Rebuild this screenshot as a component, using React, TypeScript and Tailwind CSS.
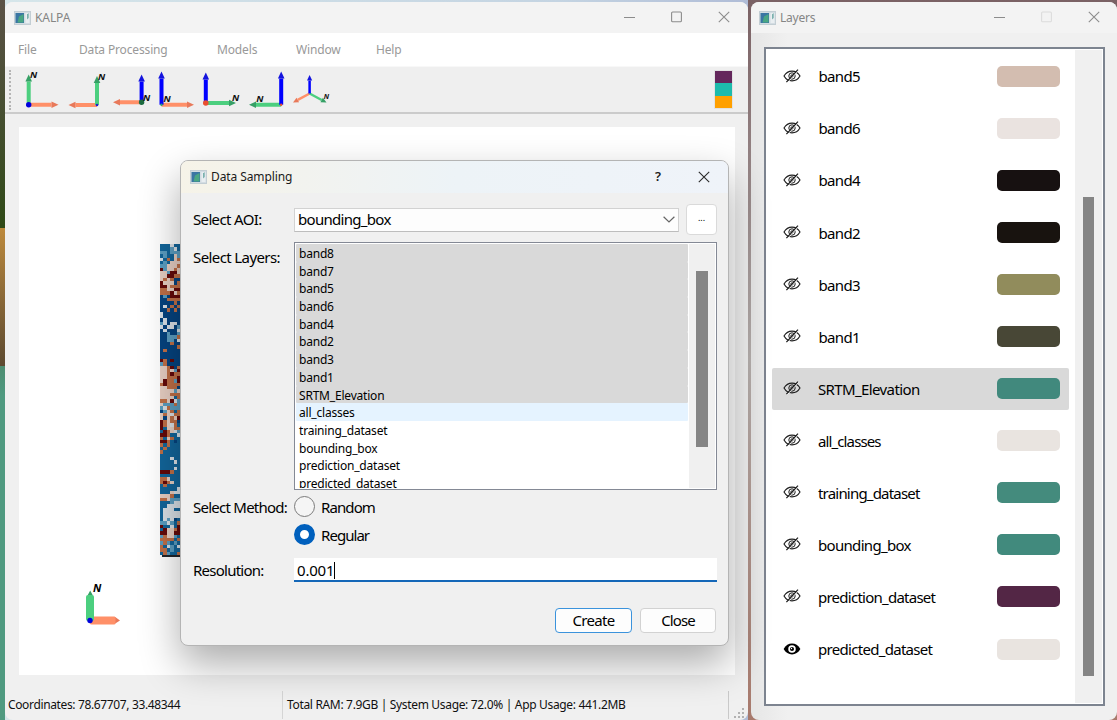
import React from "react";

const GREEN = "#4ccf7f";
const ORANGE = "#ff9068";
const BLUE = "#0000ff";

type Axis = { to: [number, number]; color: string; head: string };
type AxisSpec = {
  box: [number, number];
  origin: [number, number];
  axes: Axis[];
  dot?: string;
  dotSize?: number;
  north: [number, number];
  thin?: boolean;
};

const up = (x: number, y: number): Axis => ({ to: [x, y], color: BLUE, head: "#1414dd" });
const green = (x: number, y: number): Axis => ({ to: [x, y], color: GREEN, head: "#36a066" });
const orange = (x: number, y: number): Axis => ({ to: [x, y], color: ORANGE, head: "#e8795a" });

const VIEWS: AxisSpec[] = [
  { box: [22, 40], origin: [28.7, 104.7], axes: [green(28.7, 74.5), orange(58.5, 104.7)], dot: "#0000dd", dotSize: 2.7, north: [30, 78] },
  { box: [62, 48], origin: [97, 105], axes: [orange(68.5, 105), green(97, 76)], dot: "#2222cc", dotSize: 1.3, north: [98, 79.6] },
  { box: [110, 43], origin: [141.6, 102.3], axes: [orange(113, 102.3), up(141.6, 74.5)], dot: "#1c6b40", dotSize: 2.7, north: [143, 100.6] },
  { box: [153, 43], origin: [161.5, 104.7], axes: [orange(194, 104.7), up(161.5, 71.5)], dot: "#2c9c78", dotSize: 1.2, north: [163.4, 102.3] },
  { box: [196, 47], origin: [205.8, 103], axes: [up(205.8, 72.5), green(236, 103)], dot: "#e9502f", dotSize: 2.8, north: [232, 100.6] },
  { box: [243, 47], origin: [281.2, 104.7], axes: [green(249, 104.7), up(281.2, 71.5)], dot: "#e9502f", dotSize: 1.2, north: [256.3, 102] },
  { box: [290, 42], origin: [309.6, 93.5], axes: [orange(293, 102.6), green(326.5, 102.6), up(309.6, 75)], north: [323.7, 99.2], thin: true },
];

function AxisIcon({ box, origin, axes, dot, dotSize, north, thin }: AxisSpec) {
  return (
    <svg width={box[1]} height={45} viewBox={`${box[0]} 67 ${box[1]} 45`} className="shrink-0">
      {axes.map(({ to, color, head }, i) => {
        const dx = to[0] - origin[0];
        const dy = to[1] - origin[1];
        const len = Math.hypot(dx, dy);
        const ux = dx / len;
        const uy = dy / len;
        const h = thin ? 5.5 : 7;
        const w = thin ? 2.6 : 3.3;
        const bx = to[0] - ux * h;
        const by = to[1] - uy * h;
        return (
          <g key={i}>
            <line x1={origin[0]} y1={origin[1]} x2={bx} y2={by} stroke={color} strokeWidth={thin ? 2.5 : 4} />
            <polygon points={`${to[0]},${to[1]} ${bx - uy * w},${by + ux * w} ${bx + uy * w},${by - ux * w}`} fill={head} />
          </g>
        );
      })}
      {dot && <circle cx={origin[0]} cy={origin[1]} r={dotSize} fill={dot} />}
      <text x={north[0]} y={north[1]} fontFamily="Noto Sans, sans-serif" fontStyle="italic" fontWeight="700" fontSize={thin ? 7 : 9.5} fill="#111">
        N
      </text>
    </svg>
  );
}

function AppIcon() {
  return (
    <svg width="17" height="14" viewBox="0 0 17 14" className="shrink-0">
      <rect x="0.5" y="0.5" width="16" height="13" fill="#d3dce2" stroke="#c3ced4" />
      <rect x="1.5" y="2" width="8.5" height="10" fill="#3a76a3" />
      <path d="M3.5 11.5L5 5.5L9.5 3V11.5Z" fill="#49a683" />
      <rect x="11.5" y="2" width="4" height="10" fill="#e9eef1" />
      <path d="M14.5 2v5l-1.2 1.5V3.5z" fill="#4a9690" />
    </svg>
  );
}

function CloseGlyph({ color }: { color: string }) {
  return (
    <svg width="12" height="12" viewBox="0 0 12 12" className="shrink-0">
      <path d="M0.8 0.8L11.2 11.2M11.2 0.8L0.8 11.2" stroke={color} strokeWidth="1.1" fill="none" />
    </svg>
  );
}

function WindowButtons({ dimMax }: { dimMax?: boolean }) {
  return (
    <div className="mb-[2px] flex items-center">
      <svg width="11" height="12" viewBox="0 0 11 12">
        <path d="M0 6.5h11" stroke="#8c8c8c" strokeWidth="1" />
      </svg>
      <svg width="11" height="12" viewBox="0 0 11 12" className="ml-9">
        <rect x="0.6" y="1" width="9.8" height="9.8" rx="1" fill="none" stroke={dimMax ? "#dcdcdc" : "#8c8c8c"} strokeWidth="1.1" />
      </svg>
      <div className="ml-9">
        <CloseGlyph color="#8c8c8c" />
      </div>
    </div>
  );
}

const CELL: Record<string, string> = {
  B: "#05437f",
  b: "#12659a",
  l: "#5b9dc0",
  w: "#d9e0e6",
  p: "#e6cec2",
  o: "#bf6f47",
  r: "#640a0a",
};

const RASTER = [
  "bbbwbbb", "bbblwbb", "llbllll", "blbbplb", "wbobpob", "blbpppp", "llpppoo", "rlppopo", "pplrrpo", "pprrooB",
  "popoBBo", "rpppBoB", "rrpoooB", "oopprro", "ooorpoo", "BlBrrrr", "BBooooB", "BBBBoBB", "BwBoBoB", "BBoBoBo",
  "wBBBBBo", "wBBBBBB", "BwBBBBB", "lwBwwBB", "wBwwBlB", "BwBBBwB", "BBlBBlB", "BBllloB", "BBllBwB", "BBBoBBB",
  "BBBBBoB", "BoBBBBB", "BBBBBBB", "BBBBBBB", "roBrBBB", "loBBBBB", "pporBor", "ppoplrB", "pporooo", "ppooorB",
  "proolro", "oroooor", "ppoooBo", "pppplpr", "pppooop", "ppppbop", "ooprwlo", "pllloll", "lwolllo", "Blpobop",
  "popwoob", "pBpopro", "ropooBo", "ropwobo", "rbppoob", "bropwlo", "rrobbwo", "obpobbb", "rrobBbo", "obobbbb",
  "bobbbbb", "obbbbbb", "bbbbbbb", "bbbwbbb", "bbbbwbb", "bbbbbbb", "bbbbwbb", "rrrobbb", "bbbbbbb", "oopbbbb",
  "oropbbb", "bobbbbb", "bbbbbwo", "bbbpwwo", "pppobbb", "oopllll", "bbblwww", "bbwwwww", "bwwwbbw", "bwwwwww",
  "bwwwwww", "bwlwBbb", "llwlbob", "rbbwbrb", "brpporb", "rrpprrr", "lopplbb", "oooobob", "lolblbb", "obwlbww",
  "ooblbbb", "bolbbob",
];

function RasterLayer() {
  return (
    <svg width="22" height="313" viewBox="0 0 22 313" shapeRendering="crispEdges" className="block">
      <rect width="22" height="311" fill="#12659a" />
      {RASTER.map((row, y) =>
        row.split("").map((c, x) => (
          <rect key={`${x}-${y}`} x={x * 3.4} y={y * 3.38} width={3.5} height={3.5} fill={CELL[c]} />
        )),
      )}
      <rect x="2" y="311" width="20" height="2" fill="#20242a" />
    </svg>
  );
}

function HiddenEye() {
  return (
    <svg width="18" height="14" viewBox="0 0 18 14" className="shrink-0" fill="none" stroke="#1d1d1d">
      <path d="M1 7C3 3.600 5.800 2.100 9 2.100S15 3.600 17 7C15 10.400 12.200 11.900 9 11.900S3 10.400 1 7Z" strokeWidth="1.15" />
      <circle cx="9" cy="7" r="3.2" strokeWidth="1" />
      <circle cx="9" cy="7" r="1.2" strokeWidth="0.9" />
      <path d="M4.3 13.6L15.8 1.1" stroke="#fff" strokeWidth="0.9" />
      <path d="M3.4 13.2L15 0.6" strokeWidth="1.25" />
    </svg>
  );
}

function VisibleEye() {
  return (
    <svg width="18" height="14" viewBox="0 0 18 14" className="shrink-0">
      <path d="M0.6 7C2.8 3.2 5.6 1.6 9 1.6S15.2 3.2 17.4 7C15.2 10.8 12.4 12.4 9 12.4S2.8 10.8 0.6 7Z" fill="#000" />
      <circle cx="9" cy="7" r="2.9" fill="#000" stroke="#fff" strokeWidth="1.7" />
      <circle cx="8.5" cy="6.5" r="0.7" fill="#fff" />
    </svg>
  );
}

type Layer = { name: string; swatch: string; label?: string; selected?: boolean; visible?: boolean };
const BAND_LABEL = "pl-[17.5px] tracking-[-0.65px]";
const LAYERS: Layer[] = [
  { name: "band5", swatch: "bg-[#d3bdb0]", label: BAND_LABEL },
  { name: "band6", swatch: "bg-[#eae3e0]", label: BAND_LABEL },
  { name: "band4", swatch: "bg-[#171111]", label: BAND_LABEL },
  { name: "band2", swatch: "bg-[#18130f]", label: BAND_LABEL },
  { name: "band3", swatch: "bg-[#918c5c]", label: BAND_LABEL },
  { name: "band1", swatch: "bg-[#484736]", label: BAND_LABEL },
  { name: "SRTM_Elevation", swatch: "bg-[#41897d]", label: "pl-[17px] tracking-[-0.62px]", selected: true },
  { name: "all_classes", swatch: "bg-[#e9e4e0]", label: "pl-[17px] tracking-[-0.88px]" },
  { name: "training_dataset", swatch: "bg-[#448b7d]", label: "pl-[17px] tracking-[-0.8px]" },
  { name: "bounding_box", swatch: "bg-[#418a7d]", label: "pl-[17px] tracking-[-0.68px]" },
  { name: "prediction_dataset", swatch: "bg-[#532645]", label: "pl-[17px] tracking-[-0.75px]" },
  { name: "predicted_dataset", swatch: "bg-[#e9e4e0]", label: "pl-[17px] tracking-[-0.7px]", visible: true },
];

const SAMPLE_LAYERS = [
  "band8", "band7", "band5", "band6", "band4", "band2", "band3", "band1", "SRTM_Elevation",
  "all_classes", "training_dataset", "bounding_box", "prediction_dataset", "predicted_dataset",
];

function SceneAxes() {
  return (
    <svg width="40" height="52" viewBox="82 576 40 52" className="block">
      <path d="M87.5 595.5L90.2 590.5L92.9 595.5Z" fill="#36a066" />
      <path d="M114.5 616.5L120 620.5L114.5 624Z" fill="#e8795a" />
      <rect x="90" y="616.5" width="25.5" height="8" rx="1.5" fill={ORANGE} />
      <rect x="86" y="595" width="8" height="26" rx="2" fill={GREEN} />
      <circle cx="90" cy="620.5" r="2.7" fill="#0000dd" />
      <text x="93" y="592" fontFamily="Noto Sans, sans-serif" fontStyle="italic" fontWeight="700" fontSize="11" fill="#000">
        N
      </text>
    </svg>
  );
}

function MainWindow() {
  return (
    <section className="flex h-[718px] w-[743px] shrink-0 flex-col overflow-hidden rounded-lg bg-[#f0f0f0]">
      <header className="flex h-[31px] shrink-0 items-center bg-[#f3f3f3] pl-[9px] pr-[18px]">
        <AppIcon />
        <span className="ml-[4px] flex-1 text-[12px] tracking-[-0.1px] text-[#858585]">KALPA</span>
        <WindowButtons />
      </header>
      <nav className="flex h-[34px] shrink-0 items-center border-b border-[#f8f8f8] bg-white pl-[13px] text-[12px] tracking-[-0.15px] text-[#999]">
        <span className="w-[61px]">File</span>
        <span className="w-[138px]">Data Processing</span>
        <span className="w-[79px]">Models</span>
        <span className="w-[80px]">Window</span>
        <span>Help</span>
      </nav>
      <div className="flex h-[47px] shrink-0 border-b-2 border-[#cbcbcb] bg-[#efefef] pl-[4px]">
        <div className="mt-[3px] h-10 w-[3px] border-l-2 border-dotted border-[#b5b5b5]" />
        <div className="ml-[10px] flex flex-1">
          {VIEWS.map((view) => (
            <AxisIcon key={view.box[0]} {...view} />
          ))}
        </div>
        <div className="mr-[15px] mt-[3px] flex h-[39px] w-[19px] flex-col border border-[#e2e2e2]">
          <div className="flex-1 bg-[#64275c]" />
          <div className="flex-1 bg-[#1dbbac]" />
          <div className="flex-1 bg-[#ffa000]" />
        </div>
      </div>
      <main className="mx-[14px] mt-[13px] h-[548px] w-[716px] shrink-0 bg-white">
        <div className="h-[313px] pl-[141px] pt-[117px]">
          <RasterLayer />
        </div>
        <div className="pl-[63px] pt-[136px]">
          <SceneAxes />
        </div>
      </main>
      <footer className="flex flex-1 items-center pl-[3px] pt-[15px] text-[12px] text-[#111]">
        <span className="h-7 w-[274px] leading-[28px] tracking-[-0.36px]">Coordinates: 78.67707, 33.48344</span>
        <span className="h-7 w-[446px] border-l border-[#d5d5d5] pl-1 leading-[28px] tracking-[-0.33px]">
          Total RAM: 7.9GB | System Usage: 72.0% | App Usage: 441.2MB
        </span>
        <span className="flex h-7 flex-1 items-end justify-end border-l border-[#c9c9c9] pr-[3px]">
          <svg width="11" height="11" viewBox="0 0 11 11" fill="#b2b2b2">
            <path d="M8 0h2v2h-2zM8 4h2v2h-2zM4 4h2v2h-2zM8 8h2v2h-2zM4 8h2v2h-2zM0 8h2v2h-2z" />
          </svg>
        </span>
      </footer>
    </section>
  );
}

function LayersWindow() {
  return (
    <section className="flex h-[718px] w-[366px] shrink-0 flex-col rounded-lg bg-[#f0f0f0] bg-linear-to-r from-[#e6e6e6] to-[#f0f0f0] to-10%">
      <header className="flex h-[31px] shrink-0 items-center rounded-t-lg bg-[#f3f3f3] pl-2 pr-[17px]">
        <AppIcon />
        <span className="ml-[4px] flex-1 text-[12px] tracking-[-0.2px] text-[#858585]">Layers</span>
        <WindowButtons dimMax />
      </header>
      <div className="ml-[13px] mt-[14px] flex h-[659px] w-[341px] border-2 border-[#7d8490] bg-white p-px">
        <div className="w-[308px] pl-[5px]">
          {LAYERS.map((layer) => (
            <div key={layer.name} className="flex h-[52.1px] items-center pr-[6px]">
              <div className={`flex h-[42px] w-full items-center rounded-xs pl-[11px] pr-[9px] ${layer.selected ? "bg-[#d9d9d9]" : ""}`}>
                <span className="-mt-px">{layer.visible ? <VisibleEye /> : <HiddenEye />}</span>
                <span className={`flex-1 pt-px text-[15px] text-black ${layer.label}`}>{layer.name}</span>
                <span className={`h-[21px] w-[63px] rounded-[5px] ${layer.swatch}`} />
              </div>
            </div>
          ))}
        </div>
        <div className="flex-1 bg-[#f0f0f0] pl-[8px] pt-[147px]">
          <div className="h-[479px] w-[11px] bg-[#858585]" />
        </div>
      </div>
    </section>
  );
}

function SamplingDialog() {
  return (
    <section className="absolute left-[180px] top-[160px] flex h-[486px] w-[549px] flex-col overflow-hidden rounded-lg border border-[#b4b4b4] bg-[#f0f0f0] text-[15px] text-black shadow-[0_18px_40px_rgba(0,0,0,0.33)]">
      <header className="flex h-[32px] shrink-0 items-center bg-linear-to-r from-[#f6f3e8] via-[#edf3f7] to-[#eff3f9] pl-[9px] pr-[18px]">
        <AppIcon />
        <span className="ml-1 flex-1 text-[12px] tracking-[-0.1px] text-[#1b1b1b]">Data Sampling</span>
        <span className="mr-[37px] text-[13px] font-semibold text-[#1b1b1b]">?</span>
        <CloseGlyph color="#2a2a2a" />
      </header>
      <div className="mt-[11px] flex h-[31px] items-center pl-3">
        <label className="w-[101px] tracking-[-0.65px]">Select AOI:</label>
        <div className="flex h-6 w-[385px] items-center justify-between border border-[#d2d2d2] border-b-[#bdbdbd] bg-[#fdfdfd] pl-[3px] pr-[3px]">
          <span className="tracking-[-0.7px]">bounding_box</span>
          <svg width="12" height="7" viewBox="0 0 12 7">
            <path d="M0.6 0.7L6 6L11.4 0.7" fill="none" stroke="#666" strokeWidth="1.2" />
          </svg>
        </div>
        <button className="ml-[7px] h-[31px] w-[31px] rounded border border-[#dadada] bg-white pb-1 text-[9px] leading-none">...</button>
      </div>
      <div className="mt-[7px] flex h-[248px] pl-3">
        <label className="w-[101px] pt-1 tracking-[-0.6px]">Select Layers:</label>
        <div className="flex h-[248px] w-[423px] overflow-hidden border border-[#848995] bg-white p-px">
          <ul className="h-[244px] w-[393px] overflow-hidden text-[12px]">
            {SAMPLE_LAYERS.map((name, i) => (
              <li
                key={name}
                className={`mr-px h-[17.7px] rounded-[1px] pl-[3px] leading-[19.4px] tracking-[-0.2px] ${i < 9 ? "bg-[#d9d9d9]" : i === 9 ? "bg-[#e5f3ff]" : ""}`}
              >
                {name}
              </li>
            ))}
          </ul>
          <div className="flex-1 bg-[#f0f0f0] pl-[7px] pt-[27px]">
            <div className="h-[176px] w-[12px] bg-[#858585]" />
          </div>
        </div>
      </div>
      <div className="mt-[5px] flex pl-3">
        <label className="w-[101px] whitespace-nowrap pt-px tracking-[-0.75px]">Select Method:</label>
        <div className="flex flex-col gap-[6px]">
          <div className="flex h-[22px] items-center">
            <span className="h-[21px] w-[21px] rounded-full border border-[#7b7b7b] bg-[#f5f5f5]" />
            <span className="ml-[6px] pt-[2px] tracking-[-0.9px]">Random</span>
          </div>
          <div className="flex h-[22px] items-center">
            <span className="h-[21px] w-[21px] rounded-full border-[6px] border-[#0060bd] bg-white" />
            <span className="ml-[6px] pt-[2px] tracking-[-0.95px]">Regular</span>
          </div>
        </div>
      </div>
      <div className="mt-[13px] flex h-6 items-center pl-3">
        <label className="w-[101px] pt-px tracking-[-0.75px]">Resolution:</label>
        <div className="flex h-6 w-[423px] items-center border-b-2 border-[#1467b8] bg-white pl-[3px] pt-[2px]">
          <span className="tracking-[-0.2px]">0.001</span>
          <span className="h-[17px] w-px bg-black" />
        </div>
      </div>
      <div className="mt-[26px] flex gap-2 pl-[374px]">
        <button className="h-[25px] w-[77px] rounded border border-[#3b93dc] bg-[#fdfdfd] leading-none tracking-[-0.7px]">Create</button>
        <button className="h-[25px] w-[76px] rounded border border-[#d2d2d2] bg-[#fdfdfd] leading-none tracking-[-0.9px]">Close</button>
      </div>
    </section>
  );
}

export default function App() {
  return (
    <div className="relative flex h-[720px] w-[1117px] gap-[3px] overflow-hidden bg-linear-to-r from-[#d6e6ea] via-[#c4d4e2] to-[#8a8fc0] font-['Noto_Sans','Open_Sans',sans-serif]">
      <div className="flex shrink-0">
        <div className="h-[720px] w-[5px] bg-linear-to-b from-[#5b6fae] from-0% via-[#40502a] via-30% to-[#4f9a80] to-55%">
          <div className="h-[228px] bg-linear-to-b from-[#5b5247] to-[#2f4a16]" />
          <div className="h-[138px] bg-linear-to-b from-[#bd8a3c] to-[#5d4a30]" />
        </div>
        <div className="flex pt-[2px]">
          <MainWindow />
        </div>
      </div>
      <div className="-ml-[3px] flex bg-linear-to-b from-[#7a6164] via-[#b4aeac] to-[#a7796c] pl-[3px] pt-[2px]">
        <LayersWindow />
      </div>
      <SamplingDialog />
    </div>
  );
}
